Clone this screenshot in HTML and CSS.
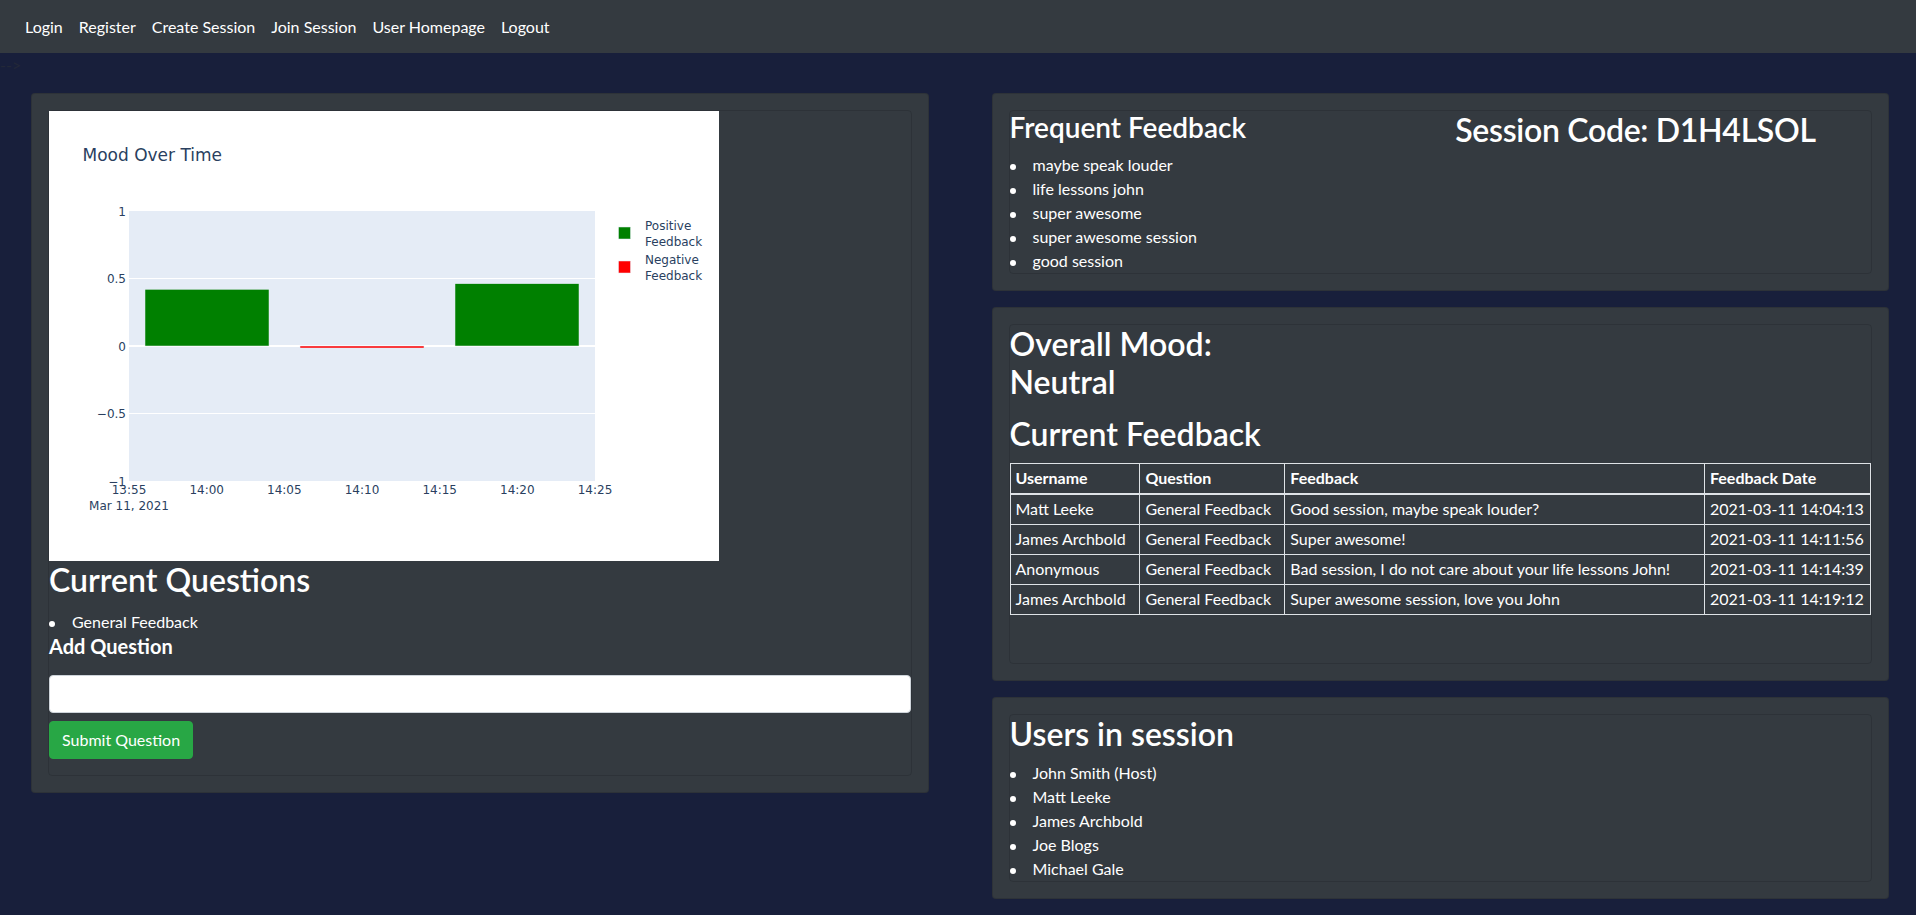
FILE: index.html
```html
<!DOCTYPE html>
<html lang="en">
<head>
<meta charset="utf-8">
<title>Session</title>
<link rel="stylesheet" href="styles.css">
</head>
<body>
<nav class="navbar">
  <a class="nav-link" href="#">Login</a>
  <a class="nav-link" href="#">Register</a>
  <a class="nav-link" href="#">Create Session</a>
  <a class="nav-link" href="#">Join Session</a>
  <a class="nav-link" href="#">User Homepage</a>
  <a class="nav-link" href="#">Logout</a>
</nav>
<div class="stray">--&gt;</div>
<main class="layout">
  <section class="card">
    <div class="card-inner">
      <div class="chart">
        <svg class="chart-svg" width="670" height="450" viewBox="0 0 670 450">
          <rect class="bg-white" x="0" y="0" width="670" height="450"/>
          <text class="ch-title" x="33.5" y="50">Mood Over Time</text>
          <rect class="plot-bg" x="80" y="100" width="466" height="270"/>
          <line class="grid" x1="80" x2="546" y1="167.5" y2="167.5"/>
          <line class="grid" x1="80" x2="546" y1="302.5" y2="302.5"/>
          <line class="zero" x1="80" x2="546" y1="235" y2="235"/>
          <rect class="bar-pos" x="96" y="178.3" width="124" height="56.7"/>
          <rect class="bar-neg" x="251" y="235" width="124" height="2"/>
          <rect class="bar-pos" x="406" y="172.7" width="124" height="62.3"/>
          <g class="ytick">
            <text x="77" y="104.5">1</text>
            <text x="77" y="172">0.5</text>
            <text x="77" y="239.5">0</text>
            <text x="77" y="307">−0.5</text>
            <text x="77" y="374.5">−1</text>
          </g>
          <g class="xtick">
            <text x="80" y="382.5">13:55</text>
            <text x="157.7" y="382.5">14:00</text>
            <text x="235.3" y="382.5">14:05</text>
            <text x="313" y="382.5">14:10</text>
            <text x="390.7" y="382.5">14:15</text>
            <text x="468.3" y="382.5">14:20</text>
            <text x="546" y="382.5">14:25</text>
            <text x="80" y="398.5">Mar 11, 2021</text>
          </g>
          <rect class="leg-pos" x="569.5" y="116" width="12" height="12"/>
          <rect class="leg-neg" x="569.5" y="150" width="12" height="12"/>
          <g class="legend">
            <text x="596" y="119">Positive</text>
            <text x="596" y="134.6">Feedback</text>
            <text x="596" y="153.4">Negative</text>
            <text x="596" y="169">Feedback</text>
          </g>
        </svg>
      </div>
      <h2 class="heading-lg q-title">Current Questions</h2>
      <ul class="bullets">
        <li>General Feedback</li>
      </ul>
      <h5 class="subhead">Add Question</h5>
      <input class="field" type="text">
      <button class="btn-submit" type="button">Submit Question</button>
    </div>
  </section>

  <div class="right-col">
    <section class="card">
      <div class="card-inner split">
        <div class="split-col">
          <h3 class="heading-md">Frequent Feedback</h3>
          <ul class="bullets">
            <li>maybe speak louder</li>
            <li>life lessons john</li>
            <li>super awesome</li>
            <li>super awesome session</li>
            <li>good session</li>
          </ul>
        </div>
        <div class="split-col code-col">
          <h2 class="heading-lg code-title">Session Code: D1H4LSOL</h2>
        </div>
      </div>
    </section>

    <section class="card">
      <div class="card-inner">
        <h2 class="heading-lg mood-title">Overall Mood:<br>Neutral</h2>
        <h2 class="heading-lg fb-title">Current Feedback</h2>
        <table class="fb-table">
          <colgroup>
            <col class="c-user">
            <col class="c-question">
            <col class="c-feedback">
            <col class="c-date">
          </colgroup>
          <thead>
            <tr><th>Username</th><th>Question</th><th>Feedback</th><th>Feedback Date</th></tr>
          </thead>
          <tbody>
            <tr><td>Matt Leeke</td><td>General Feedback</td><td>Good session, maybe speak louder?</td><td>2021-03-11 14:04:13</td></tr>
            <tr><td>James Archbold</td><td>General Feedback</td><td>Super awesome!</td><td>2021-03-11 14:11:56</td></tr>
            <tr><td>Anonymous</td><td>General Feedback</td><td>Bad session, I do not care about your life lessons John!</td><td>2021-03-11 14:14:39</td></tr>
            <tr><td>James Archbold</td><td>General Feedback</td><td>Super awesome session, love you John</td><td>2021-03-11 14:19:12</td></tr>
          </tbody>
        </table>
      </div>
    </section>

    <section class="card">
      <div class="card-inner">
        <h2 class="heading-lg users-title">Users in session</h2>
        <ul class="bullets">
          <li>John Smith (Host)</li>
          <li>Matt Leeke</li>
          <li>James Archbold</li>
          <li>Joe Blogs</li>
          <li>Michael Gale</li>
        </ul>
      </div>
    </section>
  </div>
</main>
</body>
</html>
```

FILE: styles.css
```css
* {
  box-sizing: border-box;
}

body {
  margin: 0;
  background: #181f3b;
  color: #212529;
  font-family: Lato, "Noto Sans", sans-serif;
  font-size: 16px;
  line-height: 1.5;
}

.navbar {
  height: 53px;
  background: #343a40;
  display: flex;
  align-items: center;
  padding: 0 16px 0 17px;
}

.nav-link {
  color: #fff;
  text-decoration: none;
  padding: 0 8px;
}

.stray {
  height: 24px;
  line-height: 24px;
  color: #232838;
}

.layout {
  display: grid;
  grid-template-columns: 1fr 1fr;
  column-gap: 63px;
  padding: 0 27px 0 31px;
  margin-top: 16px;
  align-items: start;
}

.card {
  background: #343a40;
  border: 1px solid rgba(0, 0, 0, 0.125);
  border-radius: 4px;
  padding: 16px;
  color: #fff;
}

.right-col .card + .card {
  margin-top: 16px;
}

.card-inner {
  border: 1px solid rgba(0, 0, 0, 0.125);
  border-radius: 4px;
}

.heading-lg,
.heading-md,
.subhead {
  margin: 0;
  line-height: 1.2;
  font-weight: 600;
}

.heading-lg {
  font-size: 32px;
}

.heading-md {
  font-size: 28px;
  margin-bottom: 8px;
}

.code-title {
  letter-spacing: -0.3px;
}

.subhead {
  font-size: 20px;
  font-weight: 700;
  margin-bottom: 17px;
}

.q-title {
  margin-bottom: 11px;
}

.mood-title {
  margin-bottom: 14px;
}

.fb-title {
  margin-bottom: 9px;
}

.users-title {
  margin-bottom: 8px;
}

.bullets {
  list-style: none;
  margin: 0;
  padding: 0;
}

.bullets li::before {
  content: "";
  display: inline-block;
  width: 6px;
  height: 6px;
  border-radius: 50%;
  background: #fff;
  margin-right: 17px;
  vertical-align: middle;
}

/* chart */
.chart {
  width: 670px;
  height: 450px;
  background: #fff;
}

.chart-svg {
  display: block;
}

.bg-white {
  fill: #fff;
}

.plot-bg {
  fill: #e5ecf6;
}

.grid {
  stroke: #fff;
  stroke-width: 1;
}

.zero {
  stroke: #fff;
  stroke-width: 2;
}

.bar-pos,
.leg-pos {
  fill: #008000;
  stroke: #e5ecf6;
  stroke-width: 0.5;
}

.bar-neg,
.leg-neg {
  fill: #ff0000;
  stroke: #e5ecf6;
  stroke-width: 0.5;
}

.ch-title {
  font-family: "DejaVu Sans", Verdana, sans-serif;
  font-size: 17px;
  fill: #2a3f5f;
}

.ytick text,
.xtick text,
.legend text {
  font-family: "DejaVu Sans", Verdana, sans-serif;
  font-size: 12px;
  fill: #2a3f5f;
}

.ytick text {
  text-anchor: end;
}

.xtick text {
  text-anchor: middle;
}

/* form */
.field {
  display: block;
  width: 100%;
  height: 38px;
  border: 1px solid #ced4da;
  border-radius: 4px;
  background: #fff;
  margin: 0 0 8px;
  padding: 6px 12px;
  font: inherit;
}

.btn-submit {
  display: block;
  height: 38px;
  padding: 6px 12px;
  border: 1px solid #28a745;
  border-radius: 4px;
  background: #28a745;
  color: #fff;
  font-family: inherit;
  font-size: 16px;
  line-height: 24px;
  margin-bottom: 16px;
}

/* frequent feedback split */
.split {
  display: grid;
  grid-template-columns: 1fr 1fr;
}

.code-col {
  padding-left: 15px;
}

/* table */
.fb-table {
  width: 100%;
  border-collapse: collapse;
  margin-bottom: 48px;
  color: #fff;
}

.fb-table th,
.fb-table td {
  border: 1px solid #dee2e6;
  padding: 2px 5px 3px;
  line-height: 24px;
  text-align: left;
  white-space: nowrap;
  font-weight: 400;
}

.fb-table thead th {
  border-bottom-width: 2px;
  font-weight: 700;
}

.c-user {
  width: 130px;
}

.c-question {
  width: 145px;
}

.c-feedback {
  width: 420px;
}

.c-date {
  width: 166px;
}
```
